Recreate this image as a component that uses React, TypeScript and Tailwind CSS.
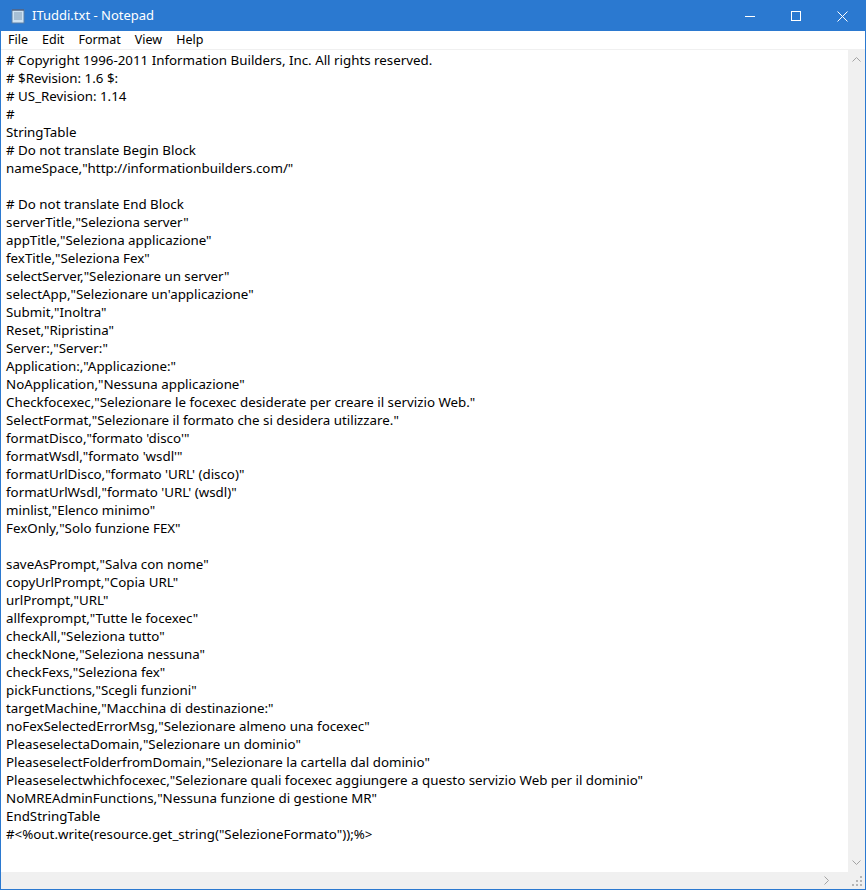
const lines = [
  '# Copyright 1996-2011 Information Builders, Inc. All rights reserved.',
  '# $Revision: 1.6 $:',
  '# US_Revision: 1.14',
  '#',
  'StringTable',
  '# Do not translate Begin Block',
  'nameSpace,"http://informationbuilders.com/"',
  '',
  '# Do not translate End Block',
  'serverTitle,"Seleziona server"',
  'appTitle,"Seleziona applicazione"',
  'fexTitle,"Seleziona Fex"',
  'selectServer,"Selezionare un server"',
  "selectApp,\"Selezionare un'applicazione\"",
  'Submit,"Inoltra"',
  'Reset,"Ripristina"',
  'Server:,"Server:"',
  'Application:,"Applicazione:"',
  'NoApplication,"Nessuna applicazione"',
  'Checkfocexec,"Selezionare le focexec desiderate per creare il servizio Web."',
  'SelectFormat,"Selezionare il formato che si desidera utilizzare."',
  "formatDisco,\"formato 'disco'\"",
  "formatWsdl,\"formato 'wsdl'\"",
  "formatUrlDisco,\"formato 'URL' (disco)\"",
  "formatUrlWsdl,\"formato 'URL' (wsdl)\"",
  'minlist,"Elenco minimo"',
  'FexOnly,"Solo funzione FEX"',
  '',
  'saveAsPrompt,"Salva con nome"',
  'copyUrlPrompt,"Copia URL"',
  'urlPrompt,"URL"',
  'allfexprompt,"Tutte le focexec"',
  'checkAll,"Seleziona tutto"',
  'checkNone,"Seleziona nessuna"',
  'checkFexs,"Seleziona fex"',
  'pickFunctions,"Scegli funzioni"',
  'targetMachine,"Macchina di destinazione:"',
  'noFexSelectedErrorMsg,"Selezionare almeno una focexec"',
  'PleaseselectaDomain,"Selezionare un dominio"',
  'PleaseselectFolderfromDomain,"Selezionare la cartella dal dominio"',
  'Pleaseselectwhichfocexec,"Selezionare quali focexec aggiungere a questo servizio Web per il dominio"',
  'NoMREAdminFunctions,"Nessuna funzione di gestione MR"',
  'EndStringTable',
  '#<%out.write(resource.get_string("SelezioneFormato"));%>',
]

export default function App() {
  return (
    <div className="w-[866px] h-[890px] flex flex-col border border-[#2b79d0] bg-white overflow-hidden font-['Noto_Sans']">
      {/* title bar */}
      <div className="h-[30px] bg-[#2b79d0] flex items-center text-white shrink-0">
        <svg width="16" height="16" viewBox="0 0 16 16" className="ml-[9px]">
          <rect x="2" y="2" width="12" height="13" fill="#cfe3f3" stroke="#5a7fa6" />
          <path d="M4 5h8M4 7h8M4 9h8M4 11h8" stroke="#7e9ab5" />
          <path d="M3 1v2M5 1v2M7 1v2M9 1v2M11 1v2M13 1v2" stroke="#556" />
        </svg>
        <span className="ml-[6px] text-[13px] flex-1">ITuddi.txt - Notepad</span>
        <div className="w-[46px] h-[30px] flex items-center justify-center">
          <div className="w-[10px] h-px bg-white" />
        </div>
        <div className="w-[46px] h-[30px] flex items-center justify-center">
          <div className="w-[10px] h-[10px] border border-white" />
        </div>
        <div className="w-[46px] h-[30px] flex items-center justify-center">
          <svg width="11" height="11" viewBox="0 0 11 11"><path d="M0.5 0.5l10 10M10.5 0.5l-10 10" stroke="white" /></svg>
        </div>
      </div>
      {/* menu */}
      <div className="h-[19px] flex items-center text-[12.5px] text-black shrink-0 border-b border-[#f0f0f0]">
        {['File', 'Edit', 'Format', 'View', 'Help'].map(m => (
          <span key={m} className="px-[7px]">{m}</span>
        ))}
      </div>
      <div className="flex flex-1 min-h-0">
        <div className="flex-1 pl-[5px] pt-[1px] font-['Liberation_Mono'] text-[13.33px] leading-[18px] text-black whitespace-pre overflow-hidden">
          {lines.map((l, i) => <div key={i} className="h-[18px]">{l}</div>)}
        </div>
        <div className="w-[17px] bg-[#f0f0f0] flex flex-col justify-between items-center">
          <svg width="9" height="6" viewBox="0 0 9 6" className="mt-[6px]"><path d="M0.5 5.5l4-4 4 4" stroke="#a3a3a3" fill="none" /></svg>
          <svg width="9" height="6" viewBox="0 0 9 6" className="mb-[6px]"><path d="M0.5 0.5l4 4 4-4" stroke="#a3a3a3" fill="none" /></svg>
        </div>
      </div>
      <div className="h-[17px] bg-[#f0f0f0] flex items-center justify-end shrink-0">
        <svg width="6" height="9" viewBox="0 0 6 9" className="mr-[22px]"><path d="M0.5 0.5l4 4-4 4" stroke="#a3a3a3" fill="none" /></svg>
        <svg width="10" height="10" viewBox="0 0 10 10" className="mr-[3px]">
          <g fill="#b5b5b5"><rect x="8" y="0" width="2" height="2" /><rect x="4" y="4" width="2" height="2" /><rect x="8" y="4" width="2" height="2" /><rect x="0" y="8" width="2" height="2" /><rect x="4" y="8" width="2" height="2" /><rect x="8" y="8" width="2" height="2" /></g>
        </svg>
      </div>
    </div>
  )
}
